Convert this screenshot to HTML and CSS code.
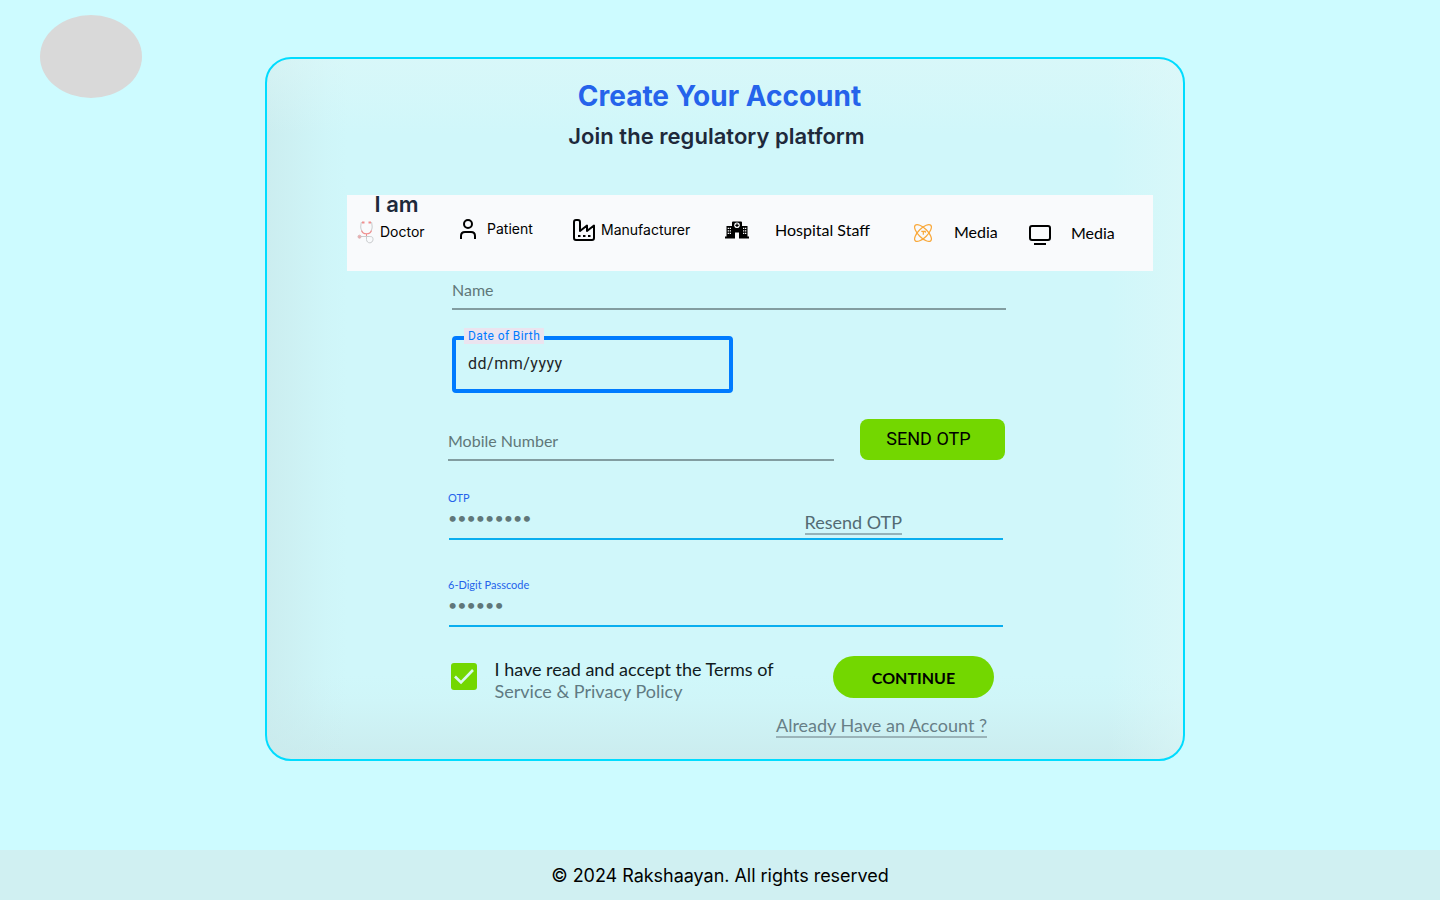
FILE: index.html
```html
<!DOCTYPE html>
<html lang="en">
<head>
<meta charset="utf-8">
<title>Create Your Account</title>
<link rel="stylesheet" href="styles.css">
</head>
<body>
<div class="page">
  <div class="logo"></div>
  <main class="card">
    <h1 class="title">Create Your Account</h1>
    <h2 class="subtitle">Join the regulatory platform</h2>
    <section class="roles">
      <h2 class="roles-title">I am</h2>
      <div class="role-list">
        <div class="role doctor">
          <svg width="18" height="23" viewBox="0 0 18 23" fill="none" stroke="#c9cbcd" stroke-width="1"><path d="M6 1.500H4.200L3.700 6C3.900 9 5.200 10.500 6 11.800M12.500 1.500H14.700L15.200 6C15 9 13.800 10.500 13 11.800"/><path d="M9.500 14V18.500C9.700 23 15.800 22.800 16 18.500C16 15.500 14.500 15.500 12 15.500H4"/><path d="M4.500 9.500Q5.500 12.800 9.500 12.800T14.500 9.500M9.500 13V15" stroke="#f08e8e" stroke-width="1.100"/><path d="M5 1.500H7.500M11.500 1.500H14" stroke="#f08e8e" stroke-width="1.800"/><circle cx="2.500" cy="15.700" r="1.500" fill="#efaaaa" stroke="#d9b5b8"/></svg>
          <span>Doctor</span>
        </div>
        <div class="role patient">
          <svg width="18" height="22" viewBox="0 0 18 22" fill="none" stroke="#000" stroke-width="2"><circle cx="9" cy="6" r="4"/><path d="M2 21V18Q2 14 6 14H12Q16 14 16 18V21"/></svg>
          <span>Patient</span>
        </div>
        <div class="role maker">
          <svg width="24" height="24" viewBox="0 0 24 24" fill="none" stroke="#000" stroke-width="2" stroke-linejoin="round"><path d="M2 4Q2 2 4 2H6Q8 2 8 4V13L15 7.500V13L22 7.500V20Q22 22 20 22H4Q2 22 2 20Z"/><path d="M6 18H8.500M11 18H13.500M16 18H18.500"/></svg>
          <span>Manufacturer</span>
        </div>
        <div class="role staff">
          <svg width="24" height="18" viewBox="0 0 24 18"><path d="M0 17.500V15.500H1.500V5H7V1.500Q7 .5 8 .5H16Q17 .5 17 1.500V5H22.500V15.500H24V17.500H14V11.500H10V17.500Z" fill="#000"/><circle cx="12" cy="4.300" r="2.800" fill="#f9fafc"/><path d="M12 2.600V6M10.300 4.300H13.700" stroke="#000" stroke-width="1.300"/><path d="M2.700 7.300H6M2.700 9.800H6M2.700 12.300H6M18 7.300H21.300M18 9.800H21.300M18 12.300H21.300" stroke="#f9fafc" stroke-width="1.300" stroke-dasharray="1.300 .7"/></svg>
          <span>Hospital Staff</span>
        </div>
        <div class="role media-one">
          <svg width="20" height="20" viewBox="0 0 20 20" fill="none" stroke="#f9a83a" stroke-width="1.200"><ellipse cx="10" cy="10" rx="11" ry="4.600" transform="rotate(45 10 10)"/><ellipse cx="10" cy="10" rx="11" ry="4.600" transform="rotate(-45 10 10)"/><path d="M8.300 8.300H12.300V9.700M10.300 8.300V11.800"/></svg>
          <span>Media</span>
        </div>
        <div class="role media-two">
          <svg width="24" height="22" viewBox="0 0 24 22" fill="none" stroke="#000" stroke-width="2"><rect x="2" y="2" width="20" height="14" rx="2"/><path d="M6 20H18"/></svg>
          <span>Media</span>
        </div>
      </div>
    </section>
    <form class="form">
      <div class="field name">Name</div>
      <div class="date"><span class="date-label">Date of Birth</span><span>dd/mm/yyyy</span></div>
      <div class="mobile-row">
        <div class="field mobile">Mobile Number</div>
        <button class="send" type="button">SEND OTP</button>
      </div>
      <div class="secret">
        <label>OTP</label>
        <div class="secret-row"><span class="dots">•••••••••</span><a class="resend">Resend OTP</a></div>
      </div>
      <div class="secret passcode">
        <label>6-Digit Passcode</label>
        <div class="secret-row"><span class="dots">••••••</span></div>
      </div>
      <div class="accept">
        <svg class="check" width="26" height="27" viewBox="0 0 26 27"><rect width="26" height="27" rx="3" fill="#73d700"/><path d="M4 13.500L10 19.500L22 7" fill="none" stroke="#d8f8ee" stroke-width="2.600"/></svg>
        <p class="terms">I have read and accept the Terms of<br><span>Service &amp; Privacy Policy</span></p>
        <button class="continue" type="button">CONTINUE</button>
      </div>
      <a class="login">Already Have an Account ?</a>
    </form>
  </main>
  <footer class="footer">© 2024 Rakshaayan. All rights reserved</footer>
</div>
</body>
</html>
```
FILE: styles.css
```css
* { box-sizing: border-box; }
body { margin: 0; background: #cdfbff; font-family: Lato, sans-serif; color: #000; }
h1, h2, p { margin: 0; }
button { border: 0; padding: 0; color: #000; background: #73d700; }
svg { display: block; flex: none; overflow: visible; }
.page { height: 900px; display: flex; align-items: flex-start; flex-wrap: wrap; align-content: space-between; overflow: hidden; white-space: nowrap; }
.logo { width: 102px; height: 83px; margin: 15px 0 0 40px; border-radius: 50%; background: #d9d9d9; }
.card {
  width: 920px; height: 704px; margin: 57px 0 0 123px; padding-top: 20px;
  border: 2px solid #00dcff; border-radius: 26px;
  background:
    linear-gradient(to left, rgba(224, 248, 248, .5), rgba(224, 248, 248, 0) 76px),
    linear-gradient(to bottom, rgba(224, 248, 248, .5), rgba(224, 248, 248, 0) 76px),
    linear-gradient(to right, rgba(202, 234, 236, .75), rgba(202, 234, 236, .5) 24px, rgba(202, 234, 236, .12) 60px, rgba(202, 234, 236, 0) 80px),
    linear-gradient(to top, rgba(202, 234, 236, .85), rgba(202, 234, 236, .55) 24px, rgba(202, 234, 236, .12) 60px, rgba(202, 234, 236, 0) 84px),
    #d0f7fa;
}
.title { height: 34px; padding-right: 11px; text-align: center; font: 700 28px/34px Inter, sans-serif; color: #2563eb; }
.subtitle { height: 28px; margin-top: 9px; padding-right: 17px; text-align: center; font: 600 22px/28px Inter, sans-serif; letter-spacing: .03px; font-feature-settings: "calt" 0, "liga" 0; color: #1e293b; }
.roles { width: 806px; height: 76px; margin: 45px 0 0 80px; background: #f9fafc; }
.roles-title { height: 18px; padding-left: 27.5px; font: 600 22px/18px Inter, sans-serif; color: #1e293b; }
.role-list { display: flex; align-items: flex-start; padding: 5px 0 0 10px; }
.role { display: flex; align-items: center; font-size: 16px; line-height: 20px; }
.doctor { width: 102px; padding-top: 3px; gap: 5px; }
.doctor span { margin-top: -1px; }
.patient { width: 113px; gap: 10px; }
.maker { width: 153px; gap: 5px; }
.doctor, .patient, .maker { font-family: Inter, sans-serif; font-size: 14px; }
.staff { width: 188px; padding-top: 2px; gap: 26px; }
.media-one { width: 115px; padding-top: 5px; gap: 21px; }
.media-one span { margin-top: -3px; }
.media-two { padding-top: 6px; gap: 19px; }
.media-two span { margin-top: -5px; }
.form { width: 558px; margin-left: 181px; }
.field { font-size: 16px; line-height: 20px; color: #607779; border-bottom: 2px solid #829da0; }
.name { width: 554px; height: 39px; margin-left: 4px; padding-top: 9px; }
.date { position: relative; width: 281px; height: 57px; margin: 26px 0 0 3.5px; padding: 14px 0 0 12.5px; border: 4px solid #007bff; border-radius: 4px; font: 16px/20px Roboto, sans-serif; letter-spacing: .5px; color: #1d2528; }
.date-label { position: absolute; left: 8.5px; top: -12px; width: 80px; height: 16px; padding-left: 4px; font-size: 12px; line-height: 16px; letter-spacing: .4px; color: #007bff; background: #ebe4ef; }
.mobile-row { display: flex; justify-content: space-between; height: 42px; margin-top: 26px; padding-right: 1px; }
.mobile { width: 386px; height: 42px; padding-top: 12px; }
.send { width: 145px; height: 41px; padding: 0 8px 2px 0; border-radius: 8px; font: 18px/39px Roboto, sans-serif; }
.secret { width: 555px; height: 49px; margin-top: 30px; }
.secret label { display: block; height: 14px; font-size: 11px; line-height: 14px; color: #2563eb; }
.secret-row { display: flex; height: 35px; margin-left: 1px; padding-top: 4px; border-bottom: 2px solid #0aaeef; }
.dots { width: 356px; margin: -1px 0 0 -1px; font-size: 16px; line-height: 20px; color: #607779; }
.resend { height: 26px; margin-left: .5px; font-size: 18px; line-height: 27px; color: #536b73; border-bottom: 2px solid #94b3b9; }
.passcode { margin-top: 38px; }
.accept { display: flex; height: 47px; margin-top: 29px; padding-left: 3px; }
.check { margin-top: 7px; }
.terms { width: 338.500px; margin: 2px 0 0 17.500px; font-size: 18px; line-height: 22px; color: #111b1e; }
.terms span { color: #607a82; }
.continue { width: 161px; height: 42px; padding-top: 2px; border-radius: 21px; font: 700 16px/40px Lato, sans-serif; }
.login { display: block; width: 211px; height: 24px; margin: 11px 0 0 328px; font-size: 18px; line-height: 22px; color: #677f87; border-bottom: 2px solid #9ab4b9; }
.footer { width: 100%; height: 50px; text-align: center; font: 18px/51px Inter, sans-serif; letter-spacing: -.03px; background: #d0f0f2; }
```
